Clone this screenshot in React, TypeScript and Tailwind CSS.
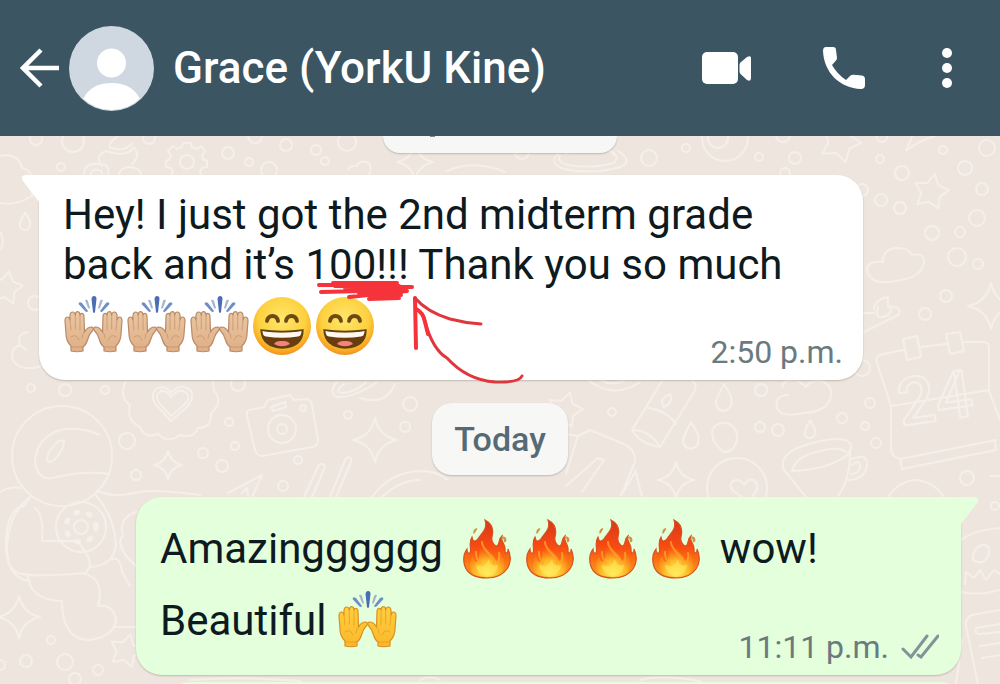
import React from "react";

const starPath = (cx: number, cy: number, r: number, turn = 0) => {
  const pts = Array.from({ length: 10 }, (_, i) => {
    const a = (i * 36 - 90 + turn) * (Math.PI / 180);
    const d = i % 2 ? r * 0.55 : r;
    return `${(cx + d * Math.cos(a)).toFixed(1)} ${(cy + d * Math.sin(a)).toFixed(1)}`;
  });
  return `M${pts.join("L")}Z`;
};

const sparklePath = (x: number, y: number, r: number) => {
  const k = r * 0.18;
  return `M${x} ${y - r}Q${x + k} ${y - k} ${x + r} ${y}Q${x + k} ${y + k} ${x} ${y + r}Q${x - k} ${y + k} ${x - r} ${y}Q${x - k} ${y - k} ${x} ${y - r}Z`;
};

const dropPath = (x: number, y: number, r: number) =>
  `M${x} ${y - r * 1.4}Q${x + r} ${y} ${x + r * 0.8} ${y + r * 0.5}A${r * 0.85} ${r * 0.85} 0 1 1 ${x - r * 0.8} ${y + r * 0.3}Q${x - r * 0.6} ${y - r * 0.4} ${x} ${y - r * 1.4}Z`;

const bubbles = [
  [36, 139, 6], [73, 141, 11], [61, 167, 4], [149, 138, 6], [228, 153, 6], [249, 162, 4],
  [286, 145, 6], [316, 150, 5], [269, 170, 8], [255, 136, 7], [325, 161, 4], [347, 142, 9],
  [522, 152, 7], [649, 158, 8], [686, 148, 4], [725, 138, 23], [718, 138, 10], [759, 157, 4],
  [795, 158, 6], [783, 135, 7], [785, 173, 5], [882, 137, 5], [880, 159, 4], [943, 150, 4],
  [987, 148, 8], [965, 168, 7], [902, 173, 7], [982, 189, 6], [881, 200, 6], [900, 208, 6],
  [977, 218, 8], [932, 233, 7], [960, 232, 5], [957, 257, 9], [978, 264, 5], [946, 296, 6],
  [925, 314, 6], [862, 190, 6], [862, 368, 8], [35, 303, 7], [31, 388, 4], [65, 390, 6],
  [105, 390, 4], [127, 441, 8], [229, 422, 4], [235, 446, 4], [203, 453, 5], [222, 466, 6],
  [136, 475, 5], [238, 384, 7], [410, 404, 7], [348, 415, 4], [405, 427, 5], [298, 460, 4],
  [283, 486, 5], [51, 640, 4], [26, 661, 6], [65, 662, 8], [98, 670, 5], [75, 679, 6],
  [0, 665, 5], [761, 390, 6], [612, 412, 4], [842, 418, 5], [870, 403, 5], [865, 426, 4],
  [876, 443, 5], [760, 427, 5], [778, 430, 6], [967, 478, 7], [995, 506, 4],
];

const Wallpaper = () => (
  <svg
    className="absolute inset-0 h-full w-full"
    viewBox="0 136 1000 548"
    preserveAspectRatio="xMidYMin slice"
    fill="none"
    stroke="#f6efe9"
    strokeWidth="2"
    strokeLinejoin="round"
    strokeLinecap="round"
    aria-hidden="true"
  >
    {bubbles.map(([x, y, r], i) => (
      <circle key={i} cx={x} cy={y} r={r} />
    ))}
    {/* stars, sparkles, drops */}
    <path d={starPath(840, 142, 21, 20)} />
    <path d={starPath(931, 192, 18, 12)} />
    <path d={starPath(6, 288, 17, 10)} />
    <path d={starPath(126, 651, 17, 15)} />
    <path d={starPath(565, 410, 18, 15)} />
    <path d={sparklePath(415, 162, 18)} />
    <path d={sparklePath(991, 306, 23)} />
    <path d={sparklePath(375, 440, 22)} />
    <path d={sparklePath(168, 465, 14)} />
    <path d={sparklePath(19, 617, 21)} />
    <path d={sparklePath(676, 480, 18)} />
    <path d={dropPath(25, 221, 6)} />
    <path d={dropPath(724, 397, 9)} />
    <path d={dropPath(691, 435, 9)} />
    <path d={dropPath(810, 429, 6)} />
    {/* gear */}
    <path d="M182 147L183 143H191L192 147L197 149L201 146L205 151L202 156L203 159L207 161V167L202 168L200 172L202 176M182 147L177 149L173 146L168 151L171 156L170 159L166 161V167L171 168L173 172L171 176" />
    <circle cx="187" cy="162" r="7" />
    {/* soft swirl and snail */}
    <path d="M110 148Q108 142 116 138L122 132M112 148Q124 152 132 144M102 166Q94 156 106 151Q128 158 134 147Q141 156 132 164M84 175Q84 164 94 164H101Q110 164 108 175M90 175Q92 169 98 170Q103 170 102 175M119 175Q120 167 130 167Q141 168 141 175" />
    {/* clouds */}
    <path d="M0 156Q18 152 22 168Q36 170 32 196Q16 206 0 203M0 232Q6 242 0 250" />
    <path d="M28 332Q16 334 20 345Q8 350 14 362Q22 372 42 366M20 345L26 350" />
    <path d="M883 262Q882 249 897 248Q909 248 912 255Q924 252 924 262Q922 278 895 281Q870 286 867 270Q868 260 883 262Z" />
    <path d="M782 387Q784 378 796 380Q803 384 806 387Q812 378 824 382Q834 388 830 400Q824 412 804 413Q780 418 777 408Q774 396 788 395" />
    {/* ringed planets */}
    <path d="M558 154Q548 163 564 169Q592 175 620 167Q634 161 618 151M560 155Q556 162 568 165Q592 169 614 163Q620 156 613 154M566 154Q590 140 614 153M447 171Q474 159 505 172" />
    <path d="M337 382Q328 392 337 397Q354 398 377 382M344 384Q334 392 342 393Q356 392 366 382M360 398Q386 406 395 384M588 380Q614 400 640 382M600 380Q612 386 624 381" />
    <path d="M348 170Q350 165 357 166Q358 160 367 162Q373 166 369 175" />
    <path d="M906 150Q910 143 912 136M907 150Q920 140 935 136" />
    {/* pencil tip on the right edge of the first message */}
    <path d="M862 313H874M874 310Q874 300 888 297V307Q894 308 888 315Q874 322 878 307M888 306Q904 307 898 315L864 332" />
    {/* calendar */}
    <path d="M903 350L880 355Q875 357 877 363L891 406V448Q891 457 900 459L996 440M921 347L946 344M964 342H984Q989 342 989 348V391L1000 420M891 406L989 390M900 459L902 469L996 450L995 442" />
    <path d="M903 339L917 336L921 357L907 360ZM946 334L960 332L964 351L950 354Z" />
    <text
      x="901"
      y="426"
      transform="rotate(-8 901 426)"
      fontFamily="Roboto, sans-serif"
      fontSize="66"
      fontWeight="500"
    >
      24
    </text>
    {/* heart badge */}
    <path d="M126 381Q118 396 130 405Q126 420 140 427Q144 439 158 434Q168 444 180 435Q194 439 198 428Q212 428 211 413Q224 402 214 391L213 381" />
    <path d="M171 421L156 405Q149 393 158 388Q166 385 171 393Q178 384 187 388Q197 393 188 406ZM171 416L159 403Q154 395 161 391Q167 390 171 397Q178 388 185 392Q191 396 186 403Z" />
    {/* camera */}
    <path d="M249 410L264 407L268 400L290 395L294 400L306 399Q311 399 312 405L318 440Q318 446 312 447L262 456Q257 456 255 450L247 416Q246 411 249 410ZM271 407L285 402L286 407L273 411Z" />
    <circle cx="282" cy="429" r="14" />
    <circle cx="282" cy="429" r="5" />
    <circle cx="303" cy="408" r="3" />
    {/* astronaut */}
    <circle cx="62" cy="456" r="50" />
    <path d="M99 435Q82 426 60 430Q36 438 35 462Q38 480 52 478Q84 470 109 474M54 460Q44 466 49 452Q58 438 64 441Q64 450 54 460" />
    <path d="M32 496Q10 510 7 545Q6 576 28 581M30 497L24 506Q8 508 6 540Q5 566 16 572Q28 578 85 573Q94 566 86 553L78 541H42Q44 514 35 508M95 494Q114 516 116 544Q114 566 90 567M0 492Q10 486 20 488M28 576Q30 600 62 601Q62 640 90 640Q116 636 116 618Q112 604 98 606Q106 578 82 573M97 491Q116 498 134 493Q150 488 200 495M106 562Q120 552 122 572L130 586M136 512Q118 518 123 536Q116 540 126 556L136 566M114 627H136" />
    <circle cx="81" cy="527" r="25" />
    <circle cx="81" cy="527" r="7" />
    <circle cx="81" cy="527" r="15" strokeDasharray="2 11" strokeWidth="5" />
    {/* pizza slice, sticks, rainbow */}
    <path d="M228 493L262 475L252 497M242 493L247 488L248 496M304 497L319 465Q324 462 325 467L312 497M330 497L346 458Q352 456 351 462L336 497M372 497Q390 472 420 471Q438 471 448 480M382 497Q400 480 420 480" />
    {/* card, tube, balloon */}
    <path d="M566 434L578 436L590 430L624 444Q636 450 635 462L621 495M566 474L578 436M566 486L598 458L604 460L582 492M635 470L642 496M622 494L634 474" />
    <path d="M662 381L632 430Q640 444 660 447L694 392Q698 384 692 381M648 408Q666 410 676 424M632 430Q650 430 660 447M664 407Q658 400 670 394Q674 402 664 407" />
    <path d="M712 432Q714 422 726 423Q738 426 737 440Q734 452 724 452Q712 444 712 432Z" />
    <circle cx="737" cy="488" r="30" />
    <path d="M742 497L732 490Q728 482 736 480Q742 480 744 485Q750 476 756 482Q760 488 752 497" />
    {/* cup */}
    <path d="M784 470Q778 456 800 447Q830 436 846 440Q856 446 846 456Q826 470 792 471Q796 456 820 451Q840 446 846 452M784 470L806 497M850 452Q850 480 838 496M852 459Q868 452 867 466Q864 480 848 480M852 465Q860 458 860 468Q858 474 851 474" />
    {/* donut, book, balloons on the right edge */}
    <path d="M888 497Q900 480 917 480Q934 482 944 497M961 540Q974 530 1000 528M961 592Q980 596 1000 590M973 560Q972 548 982 545Q992 544 988 556Q984 566 973 560M965 584L966 572L974 578L980 570L986 580L994 570L1000 574M990 476H1000M1000 610L972 615Q965 618 966 626L978 684M1000 624L976 628Q974 634 980 634L1000 632M980 646L1000 643M982 658L1000 655M956 684L962 640" />
    <path d="M190 680Q240 676 300 681M420 680Q430 674 440 680M640 680Q660 674 700 681" />
  </svg>
);

const Hand = ({ fill, line }: { fill: string; line: string }) => (
  <g stroke={line} strokeLinejoin="round" strokeLinecap="round">
    <path
      d="M8 55V50Q3 45 3 38L2 25Q2 21 4.500 21Q6.500 21 7 24V19Q7.500 16 9.500 16Q12 16 12.300 19Q12.500 15.500 14.700 15.500Q17 16 17 19Q17.500 17 19.500 17.500Q21 18 21 21L21.500 36Q24 31 29 31Q31 32 30 34Q26 38 24.500 44Q23 49 20 51V55Q14 56.500 8 55Z"
      fill={fill}
      strokeWidth="1.200"
    />
    <path
      d="M7 24L8 34M12.300 19V33M17 19V34M21.500 36Q19 38 19 42M8 41Q13 37 16 44M8 51H20"
      fill="none"
      strokeWidth="0.900"
      opacity="0.700"
    />
  </g>
);

const RaisedHands = ({ tone }: { tone: "light" | "yellow" }) => {
  const fill = tone === "light" ? "url(#skin)" : "url(#gold)";
  const line = tone === "light" ? "#b98a68" : "#d9921f";
  return (
    <svg viewBox="0 0 60 60" className="h-[60px] w-[60px] shrink-0" role="img" aria-label="raised hands">
      <defs>
        <linearGradient id="skin" x1="0" y1="0" x2="0" y2="1">
          <stop offset="0" stopColor="#eac7a2" />
          <stop offset="1" stopColor="#dfae86" />
        </linearGradient>
        <linearGradient id="gold" x1="0" y1="0" x2="0" y2="1">
          <stop offset="0" stopColor="#ffcf42" />
          <stop offset="1" stopColor="#fbb828" />
        </linearGradient>
      </defs>
      <Hand fill={fill} line={line} />
      <g transform="translate(61 0) scale(-1 1)">
        <Hand fill={fill} line={line} />
      </g>
      <path d="M28.500 3Q29 0 31 0Q33.500 0 33.500 3L32 16Q31 18 30 16Z" fill="#4a6db3" />
      <path d="M15.500 8Q16 5 19 7L25 15Q24 17 22 15ZM46.500 8Q46 5 43 7L37 15Q38 17 40 15Z" fill="#6f8fc4" />
      <path d="M22 4Q24 3 25 5L27 12Q26 13 25 12ZM40 4Q38 3 37 5L35 12Q36 13 37 12Z" fill="#a3b6cf" />
    </svg>
  );
};

const GrinningFace = () => (
  <svg viewBox="0 0 60 60" className="h-[60px] w-[60px] shrink-0" role="img" aria-label="grinning face">
    <defs>
      <radialGradient id="face" cx="0.5" cy="0.38" r="0.62">
        <stop offset="0" stopColor="#ffe66c" />
        <stop offset="0.65" stopColor="#fdd13f" />
        <stop offset="0.9" stopColor="#f8a823" />
        <stop offset="1" stopColor="#f08f1c" />
      </radialGradient>
    </defs>
    <circle cx="30" cy="30" r="29" fill="url(#face)" />
    <path
      d="M15 25Q16 20 20.500 20Q25 20 26 25M34 25Q35 20 39.500 20Q44 20 45 25"
      fill="none"
      stroke="#6d4a12"
      strokeWidth="3.800"
      strokeLinecap="round"
    />
    <path d="M9 34Q30 37 51 34Q51 51 30 52Q10 51 9 34Z" fill="#6a3c10" />
    <path d="M22 48Q24 44.500 30 45Q36 44.500 38 48Q30 52.500 22 48Z" fill="#f2837f" />
    <path d="M10.500 35Q30 38 49.500 35Q49.500 40 46 40.500Q30 43 14 40.500Q10.500 40 10.500 35Z" fill="#fff8ee" />
    <path d="M9 34Q30 37 51 34Q51 51 30 52Q10 51 9 34Z" fill="none" stroke="#5d4310" strokeWidth="1.400" />
  </svg>
);

const Fire = () => (
  <svg viewBox="-6 0 60 60" className="h-[60px] w-[60px] shrink-0" role="img" aria-label="fire">
    <defs>
      <linearGradient id="flame" x1="0" y1="0" x2="0" y2="1">
        <stop offset="0" stopColor="#d8361c" />
        <stop offset="0.45" stopColor="#f84a12" />
        <stop offset="0.7" stopColor="#fb7212" />
        <stop offset="1" stopColor="#f9a524" />
      </linearGradient>
      <radialGradient id="core" cx="0.5" cy="0.9" r="0.75">
        <stop offset="0" stopColor="#ffee5c" />
        <stop offset="0.5" stopColor="#fdb827" />
        <stop offset="1" stopColor="#fb7a14" stopOpacity="0" />
      </radialGradient>
    </defs>
    <path
      d="M22 1C28 4 31 10 29 18C28 22 31 27 34 27C37 25 35 20 39 17C37 23 43 25 42 31Q42 35 43.500 34Q45.500 33 45 30C49 38 47 46 44 50C39 57 32 59 24 59C13 59 4 55 1.500 46C0 40 1 34 4 30Q4 35 7 34C9 30 5 24 9 18C10 23 12 23 15 20C18 14 25 11 22 1Z"
      fill="url(#flame)"
      stroke="#d6521e"
      strokeWidth="1.200"
    />
    <path d="M19 22C21 30 31 34 33 42C36 40 37 36 36 32C43 40 44 52 35 56Q24 60 12 56C4 51 7 41 10 36Q11 43 14 43C18 38 15 30 19 22Z" fill="url(#core)" />
    <path d="M19 23C19 32 31 36 31 44M13 33Q13 40 17 44M36 34Q37 40 34 44" fill="none" stroke="#fda32b" strokeWidth="2" opacity="0.8" strokeLinecap="round" />
    <path d="M26 40Q27 49 35 46Q34 56 24 57Q14 56 13 46Q22 50 26 40Z" fill="#ffe95a" opacity="0.6" />
    <path d="M10.500 15Q9.500 10 14 9Q15 10 13 12Q12 15 10.500 15ZM38 18Q43 16 43.500 21Q43 24 41 23Q41 19 38 18Z" fill="#cf9540" />
  </svg>
);

const Header = () => (
  <header className="flex h-[136px] shrink-0 items-center bg-[#3b5563] pl-5 pr-12 text-white">
    <button aria-label="Back">
      <svg viewBox="0 0 40 40" className="h-10 w-10" fill="none" stroke="currentColor" strokeWidth="4.500">
        <path d="M39 20H3M21 2L3 20L21 38" />
      </svg>
    </button>
    <svg viewBox="0 0 85 85" className="ml-[9px] h-[85px] w-[85px] shrink-0" aria-hidden="true">
      <clipPath id="avatar">
        <circle cx="42.500" cy="42.500" r="41.500" />
      </clipPath>
      <circle cx="42.500" cy="42.500" r="42.500" fill="#cfd8e0" />
      <g clipPath="url(#avatar)" fill="#fff">
        <circle cx="42.500" cy="37" r="14.500" />
        <path d="M14 73Q22 57 42.500 57Q63 57 71 73V85H14Z" />
      </g>
    </svg>
    <h1 className="ml-[19px] flex-1 whitespace-nowrap text-[44px] font-medium leading-[50px]">Grace (YorkU Kine)</h1>
    <div className="flex items-center">
      <button aria-label="Video call" className="mr-[72px]">
        <svg viewBox="0 0 49 32" className="h-8 w-[49px]" fill="currentColor">
          <rect width="36" height="32" rx="5" />
          <path d="M37.500 13Q37.500 11.500 38.500 10.500L45 5Q49 3 49 6V26Q49 30 45 28L38.500 22Q37.500 21 37.500 19Z" />
        </svg>
      </button>
      <button aria-label="Call" className="mr-[77px]">
        <svg viewBox="0 0 42 42" className="h-[42px] w-[42px]" fill="currentColor">
          <path d="M3 0H10Q13 0 13 3L14 11Q14 13 12.500 14L9 18Q14 27 23 33L27 29Q28.500 27.500 31 27.800L39 28.500Q42 29 42 32V38Q42 42 38 42C17 41 1 26 0 4Q0 0 3 0Z" />
        </svg>
      </button>
      <button aria-label="More options">
        <svg viewBox="0 0 10 40" className="h-10 w-[10px]" fill="currentColor">
          <circle cx="5" cy="5" r="5" />
          <circle cx="5" cy="20" r="5" />
          <circle cx="5" cy="35" r="5" />
        </svg>
      </button>
    </div>
  </header>
);

/* hand-drawn underline and arrow */
const RedMarks = () => (
  <svg
    viewBox="0 0 210 110"
    className="pointer-events-none absolute left-[276px] top-[103px] h-[110px] w-[210px]"
    fill="none"
    stroke="#f5333a"
    strokeLinecap="round"
    strokeLinejoin="round"
    aria-hidden="true"
  >
    <path d="M4 7L40 7M18 5L82 5M20 8L97 9M6 14L90 12M30 10L84 8M34 19L92 13M44 15L86 15M54 21L86 17M54 21L84 20" strokeWidth="4" />
    <path d="M101 70L100 20" strokeWidth="4" />
    <path d="M100 20Q112 34 135 41Q150 45 166 46" strokeWidth="3" stroke="#e0373c" />
    <path d="M101 31Q108 34 110 44Q118 72 132 80Q152 102 180 104Q204 105 207 98" strokeWidth="3" stroke="#e0373c" />
    <path d="M101 31Q108 34 110 44L113 56" strokeWidth="4" />
  </svg>
);

const App = () => {
  return (
    <div className="flex h-screen flex-col overflow-hidden bg-[#eee6de] font-['Roboto',sans-serif] text-[#0d1a20]">
      <Header />
      <main className="relative flex-1 overflow-hidden">
        <Wallpaper />
        <div className="relative flex flex-col">
          <div className="h-[17px] w-[234px] self-center rounded-b-[20px] bg-[#f7f7f5] pl-[47px] shadow-[0_1px_2px_rgba(0,0,0,0.2)]">
            <div className="h-px w-[5px] bg-[#7d888e]" />
          </div>

          <article className="relative ml-[39px] mt-[22px] w-[824px] max-w-full rounded-[26px] rounded-tl-none bg-white pb-2 pl-6 pr-5 pt-[15px] shadow-[0_1px_2px_rgba(0,0,0,0.2)]">
            <svg viewBox="0 0 30 30" className="absolute -left-[18px] top-0 h-[30px] w-[30px]" aria-hidden="true">
              <path d="M30 0H4Q-1 1 2 6L18 27V30H30Z" fill="#fff" />
            </svg>
            <p className="text-[42px] leading-[50px]">
              Hey! I just got the 2nd midterm grade
              <br />
              back and it’s 100!!! Thank you so much
            </p>
            <div className="flex min-h-[82px] items-end justify-between">
              <div className="flex gap-[3px] self-start pt-[6px]">
                <RaisedHands tone="light" />
                <RaisedHands tone="light" />
                <RaisedHands tone="light" />
                <GrinningFace />
                <GrinningFace />
              </div>
              <time className="text-[32px] leading-10 text-[#6b7a80]">2:50 p.m.</time>
            </div>
            <RedMarks />
          </article>

          <div className="mt-[23px] flex h-[72px] items-center self-center rounded-[20px] bg-[#f7f7f5] px-[22px] text-[34px] font-medium text-[#566a75] shadow-[0_1px_2px_rgba(0,0,0,0.2)]">
            Today
          </div>

          <article className="relative mr-[39px] mt-[22px] w-[825px] max-w-full self-end rounded-[26px] rounded-tr-none bg-[#e4ffdb] pb-2 pl-6 pr-[22px] pt-4 shadow-[0_1px_2px_rgba(0,0,0,0.2)]">
            <svg viewBox="0 0 30 30" className="absolute -right-[18px] top-0 h-[30px] w-[30px]" aria-hidden="true">
              <path d="M0 0H26Q31 1 28 6L12 27V30H0Z" fill="#e4ffdb" />
            </svg>
            <p className="flex items-center text-[42px] leading-[72px]">
              Amazingggggg
              <span className="mx-[14px] flex gap-[3px]">
                <Fire />
                <Fire />
                <Fire />
                <Fire />
              </span>
              wow!
            </p>
            <div className="flex min-h-[82px] items-end justify-between">
              <p className="flex items-center self-start text-[42px] leading-[72px]">
                Beautiful
                <span className="ml-[11px]">
                  <RaisedHands tone="yellow" />
                </span>
              </p>
              <div className="flex items-center gap-3">
                <time className="text-[32px] leading-10 text-[#6b7a80]">11:11 p.m.</time>
                <svg viewBox="0 0 38 26" className="h-[26px] w-[38px]" fill="none" stroke="#82939a" strokeWidth="3" strokeLinecap="round" aria-label="Delivered">
                  <path d="M2 15L10 23L26 2M17 21L20 23L37 2" />
                </svg>
              </div>
            </div>
          </article>

          <article className="mr-[39px] mt-[7px] h-10 w-[792px] max-w-full self-end rounded-[26px] bg-[#e4ffdb]" />
        </div>
      </main>
    </div>
  );
};

export default App;
